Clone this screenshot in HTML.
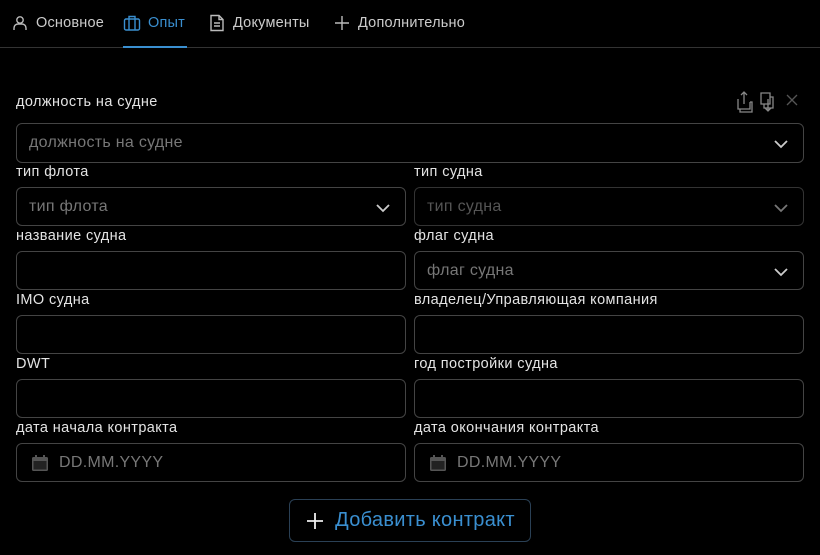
<!DOCTYPE html>
<html><head><meta charset="utf-8"><style>
*{box-sizing:border-box;margin:0;padding:0}
body{width:820px;height:555px;background:#000;font-family:"Liberation Sans","Noto Sans CJK SC",sans-serif;color:#ddd;position:relative;overflow:hidden}
.tabs{position:absolute;left:0;top:0;width:820px;height:48px;border-bottom:1px solid #333}
.tab{position:absolute;top:14px;font-size:14.5px;letter-spacing:0.2px;color:#ccc;display:flex;align-items:center;gap:7px}
.tab svg{width:18px;height:18px}
.ul{position:absolute;left:123px;top:46px;width:64px;height:2px;background:#3a8fd0}
.lbl{position:absolute;font-size:14.5px;letter-spacing:0.4px;color:#e4e4e4}
.box{position:absolute;border:1px solid #444;border-radius:6px;height:39px;font-size:16px;letter-spacing:0.3px;color:#777;display:flex;align-items:center;padding-left:12px}
.chev{position:absolute;right:14px;top:12px}
.btn{position:absolute;left:289px;top:499px;width:242px;height:43px;border:1px solid #2a4055;border-radius:6px;color:#3a8fd0;font-size:20px;letter-spacing:0.3px;display:flex;align-items:center;justify-content:center;gap:10px}
</style></head><body>
<div class="tabs">
<div class="tab" style="left:11px"><svg viewBox="0 0 18 18" fill="none" stroke="#bbb" stroke-width="1.4"><circle cx="9" cy="6" r="3.2"/><path d="M3 16v-2a4 4 0 0 1 4-4h4a4 4 0 0 1 4 4v2"/></svg>Основное</div>
<div class="tab" style="left:123px;color:#3a8fd0"><svg viewBox="0 0 18 18" fill="none" stroke="#3a8fd0" stroke-width="1.4"><rect x="1.5" y="5" width="15" height="11" rx="1.5"/><path d="M6 5V2.5h6V5M6 5v11M12 5v11"/></svg>Опыт</div>
<div class="tab" style="left:208px"><svg viewBox="0 0 18 18" fill="none" stroke="#bbb" stroke-width="1.4"><path d="M3 1.5h8l4 4v11H3z M11 1.5v4h4 M6 9h6M6 12h6"/></svg>Документы</div>
<div class="tab" style="left:333px"><svg viewBox="0 0 18 18" fill="none" stroke="#bbb" stroke-width="1.4"><path d="M9 2v14M2 9h14"/></svg>Дополнительно</div>
<div class="ul"></div>
</div>

<div class="lbl" style="left:16px;top:94px">должность на судне</div>
<svg style="position:absolute;left:733px;top:89px" width="70" height="26" viewBox="0 0 70 26" fill="none" stroke="#888" stroke-width="1.3">
<path d="M5 10v10h12V13M7 20v3h12V13h-2M11 15V3M8 6l3-3 3 3"/>
<path d="M28 4h9v11h-9zM31 15v4h9V8h-3M35 10v12M32 19l3 3 3-3"/>
<path d="M54 6l10 10M64 6L54 16" stroke="#555"/>
</svg>
<div class="box" style="left:16px;top:123px;width:788px;height:40px">должность на судне<svg class="chev" width="16" height="16" viewBox="0 0 16 16" fill="none" stroke="#ccc" stroke-width="1.8"><path d="M2 5l6 6 6-6"/></svg></div>

<div class="lbl" style="left:16px;top:164px">тип флота</div>
<div class="lbl" style="left:414px;top:164px">тип судна</div>
<div class="box" style="left:16px;top:187px;width:390px">тип флота<svg class="chev" width="16" height="16" viewBox="0 0 16 16" fill="none" stroke="#ccc" stroke-width="1.8"><path d="M2 5l6 6 6-6"/></svg></div>
<div class="box" style="left:414px;top:187px;width:390px;color:#555;border-color:#333">тип судна<svg class="chev" width="16" height="16" viewBox="0 0 16 16" fill="none" stroke="#777" stroke-width="1.8"><path d="M2 5l6 6 6-6"/></svg></div>

<div class="lbl" style="left:16px;top:228px">название судна</div>
<div class="lbl" style="left:414px;top:228px">флаг судна</div>
<div class="box" style="left:16px;top:251px;width:390px"></div>
<div class="box" style="left:414px;top:251px;width:390px">флаг судна<svg class="chev" width="16" height="16" viewBox="0 0 16 16" fill="none" stroke="#ccc" stroke-width="1.8"><path d="M2 5l6 6 6-6"/></svg></div>

<div class="lbl" style="left:16px;top:292px">IMO судна</div>
<div class="lbl" style="left:414px;top:292px">владелец/Управляющая компания</div>
<div class="box" style="left:16px;top:315px;width:390px"></div>
<div class="box" style="left:414px;top:315px;width:390px"></div>

<div class="lbl" style="left:16px;top:356px">DWT</div>
<div class="lbl" style="left:414px;top:356px">год постройки судна</div>
<div class="box" style="left:16px;top:379px;width:390px"></div>
<div class="box" style="left:414px;top:379px;width:390px"></div>

<div class="lbl" style="left:16px;top:420px">дата начала контракта</div>
<div class="lbl" style="left:414px;top:420px">дата окончания контракта</div>
<div class="box" style="left:16px;top:443px;width:390px;gap:10px;padding-left:14px"><svg width="18" height="18" viewBox="0 0 18 18"><rect x="1" y="3" width="16" height="14" rx="1.5" fill="#555"/><rect x="2.5" y="7" width="13" height="8.5" fill="#222"/><rect x="4" y="1" width="2" height="4" fill="#555"/><rect x="12" y="1" width="2" height="4" fill="#555"/></svg>DD.MM.YYYY</div>
<div class="box" style="left:414px;top:443px;width:390px;gap:10px;padding-left:14px"><svg width="18" height="18" viewBox="0 0 18 18"><rect x="1" y="3" width="16" height="14" rx="1.5" fill="#555"/><rect x="2.5" y="7" width="13" height="8.5" fill="#222"/><rect x="4" y="1" width="2" height="4" fill="#555"/><rect x="12" y="1" width="2" height="4" fill="#555"/></svg>DD.MM.YYYY</div>

<div class="btn"><svg width="20" height="20" viewBox="0 0 20 20" stroke="#eee" stroke-width="1.8"><path d="M10 2v16M2 10h16"/></svg>Добавить контракт</div>
</body></html>
